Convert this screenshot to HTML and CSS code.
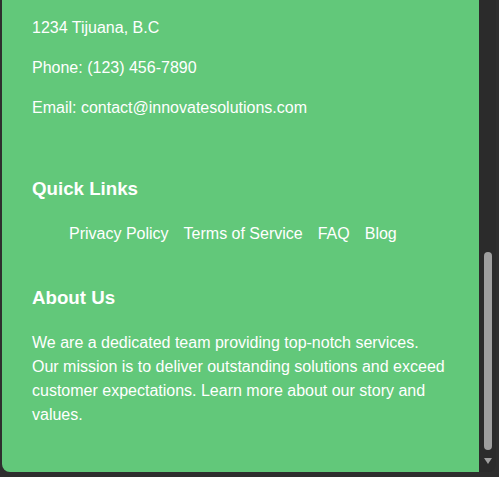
FILE: index.html
```html
<!DOCTYPE html>
<html lang="en">
<head>
<meta charset="utf-8">
<title>Footer</title>
<link rel="stylesheet" href="styles.css">
</head>
<body>
<div class="frame">
  <footer class="footer">
    <section class="section">
      <p>1234 Tijuana, B.C</p>
      <p>Phone: (123) 456-7890</p>
      <p>Email: contact@innovatesolutions.com</p>
    </section>
    <section class="section">
      <h3>Quick Links</h3>
      <ul class="links">
        <li><a href="#">Privacy Policy</a></li>
        <li><a href="#">Terms of Service</a></li>
        <li><a href="#">FAQ</a></li>
        <li><a href="#">Blog</a></li>
      </ul>
    </section>
    <section class="section">
      <h3>About Us</h3>
      <p>We are a dedicated team providing top-notch services. Our mission is to deliver outstanding solutions and exceed customer expectations. Learn more about our story and values.</p>
    </section>
  </footer>
  <div class="scrollbar">
    <div class="thumb"></div>
    <div class="arrow"></div>
  </div>
</div>
</body>
</html>
```

FILE: styles.css
```css
html, body {
  margin: 0;
  height: 477px;
  overflow: hidden;
}
body {
  background: #2e2e2e;
  font-family: "Liberation Sans", Arial, sans-serif;
  font-size: 16px;
  line-height: 1.5;
  color: #ffffff;
}
.frame {
  margin-left: 2px;
  width: 494px;
  height: 472px;
  display: flex;
  border-radius: 0 0 8px 8px;
  overflow: hidden;
  background: #2b2b2b;
}
.footer {
  flex: 1;
  background: #62c87a;
  padding: 16px 30px 29px;
  display: flex;
  flex-direction: column;
  gap: 20px;
}
.section p {
  margin: 0 0 16px;
}
.section p:first-child {
  margin-top: 0;
}
.section h3 {
  font-size: 18.72px;
  font-weight: bold;
  margin: 18.72px 0;
}
.links {
  list-style: none;
  margin: 0;
  padding: 0 0 0 37px;
  display: flex;
  gap: 15px;
}
.links a {
  color: #ffffff;
  text-decoration: none;
}
.scrollbar {
  width: 17px;
  display: flex;
  flex-direction: column;
  align-items: center;
  justify-content: flex-end;
  padding-bottom: 8px;
  box-sizing: border-box;
}
.thumb {
  width: 8px;
  height: 198px;
  border-radius: 4px;
  background: #9f9f9f;
}
.arrow {
  width: 0;
  height: 0;
  margin-top: 8px;
  border-left: 4px solid transparent;
  border-right: 4px solid transparent;
  border-top: 6px solid #9f9f9f;
}
```
